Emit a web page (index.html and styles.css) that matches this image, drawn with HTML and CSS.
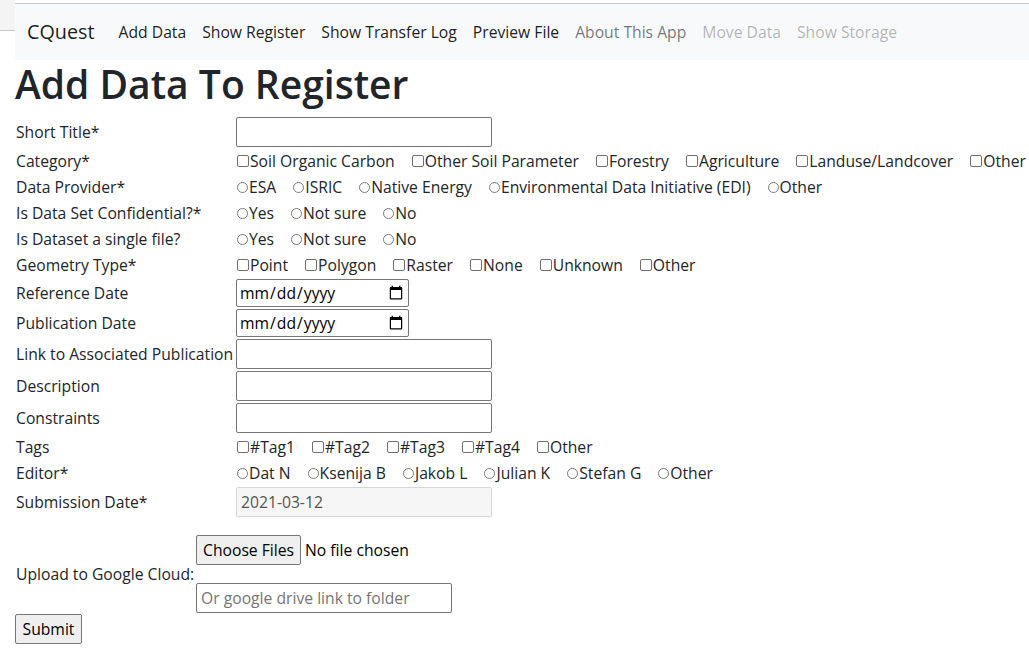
FILE: index.html
```html
<!DOCTYPE html>
<html lang="en">
<head>
<meta charset="utf-8">
<title>CQuest - Add Data</title>
<link rel="stylesheet" href="styles.css">
</head>
<body>
<div class="page">
  <div class="gutter"><div class="gutter-tab"></div></div>
  <div class="main">
    <nav class="navbar">
      <a class="brand" href="#">CQuest</a>
      <a class="nav-link active" href="#">Add Data</a>
      <a class="nav-link active" href="#">Show Register</a>
      <a class="nav-link active" href="#">Show Transfer Log</a>
      <a class="nav-link active" href="#">Preview File</a>
      <a class="nav-link" href="#">About This App</a>
      <a class="nav-link disabled" href="#">Move Data</a>
      <a class="nav-link disabled" href="#">Show Storage</a>
    </nav>
    <h1 class="title">Add Data To Register</h1>
    <form class="form">
      <div class="grid">
        <label class="lbl row-30">Short Title*</label>
        <div class="ctl row-30"><input class="text" type="text"></div>

        <label class="lbl">Category*</label>
        <div class="ctl opts">
          <label class="opt"><input type="checkbox" class="cb">Soil Organic Carbon</label>
          <label class="opt"><input type="checkbox" class="cb">Other Soil Parameter</label>
          <label class="opt"><input type="checkbox" class="cb">Forestry</label>
          <label class="opt"><input type="checkbox" class="cb">Agriculture</label>
          <label class="opt"><input type="checkbox" class="cb">Landuse/Landcover</label>
          <label class="opt"><input type="checkbox" class="cb">Other</label>
        </div>

        <label class="lbl">Data Provider*</label>
        <div class="ctl opts">
          <label class="opt"><input type="radio" name="prov" class="rb">ESA</label>
          <label class="opt"><input type="radio" name="prov" class="rb">ISRIC</label>
          <label class="opt"><input type="radio" name="prov" class="rb">Native Energy</label>
          <label class="opt"><input type="radio" name="prov" class="rb">Environmental Data Initiative (EDI)</label>
          <label class="opt"><input type="radio" name="prov" class="rb">Other</label>
        </div>

        <label class="lbl">Is Data Set Confidential?*</label>
        <div class="ctl opts">
          <label class="opt"><input type="radio" name="conf" class="rb">Yes</label>
          <label class="opt"><input type="radio" name="conf" class="rb">Not sure</label>
          <label class="opt"><input type="radio" name="conf" class="rb">No</label>
        </div>

        <label class="lbl">Is Dataset a single file?</label>
        <div class="ctl opts">
          <label class="opt"><input type="radio" name="single" class="rb">Yes</label>
          <label class="opt"><input type="radio" name="single" class="rb">Not sure</label>
          <label class="opt"><input type="radio" name="single" class="rb">No</label>
        </div>

        <label class="lbl">Geometry Type*</label>
        <div class="ctl opts">
          <label class="opt"><input type="checkbox" class="cb">Point</label>
          <label class="opt"><input type="checkbox" class="cb">Polygon</label>
          <label class="opt"><input type="checkbox" class="cb">Raster</label>
          <label class="opt"><input type="checkbox" class="cb">None</label>
          <label class="opt"><input type="checkbox" class="cb">Unknown</label>
          <label class="opt"><input type="checkbox" class="cb">Other</label>
        </div>

        <label class="lbl row-28">Reference Date</label>
        <div class="ctl row-28"><input class="date" type="date"></div>

        <label class="lbl row-28">Publication Date</label>
        <div class="ctl row-28"><input class="date" type="date"></div>

        <label class="lbl row-30">Link to Associated Publication</label>
        <div class="ctl row-30"><input class="text" type="text"></div>

        <label class="lbl row-30">Description</label>
        <div class="ctl row-30"><input class="text" type="text"></div>

        <label class="lbl row-30">Constraints</label>
        <div class="ctl row-30"><input class="text" type="text"></div>

        <label class="lbl">Tags</label>
        <div class="ctl opts">
          <label class="opt"><input type="checkbox" class="cb">#Tag1</label>
          <label class="opt"><input type="checkbox" class="cb">#Tag2</label>
          <label class="opt"><input type="checkbox" class="cb">#Tag3</label>
          <label class="opt"><input type="checkbox" class="cb">#Tag4</label>
          <label class="opt"><input type="checkbox" class="cb">Other</label>
        </div>

        <label class="lbl">Editor*</label>
        <div class="ctl opts">
          <label class="opt"><input type="radio" name="ed" class="rb">Dat N</label>
          <label class="opt"><input type="radio" name="ed" class="rb">Ksenija B</label>
          <label class="opt"><input type="radio" name="ed" class="rb">Jakob L</label>
          <label class="opt"><input type="radio" name="ed" class="rb">Julian K</label>
          <label class="opt"><input type="radio" name="ed" class="rb">Stefan G</label>
          <label class="opt"><input type="radio" name="ed" class="rb">Other</label>
        </div>

        <label class="lbl row-30">Submission Date*</label>
        <div class="ctl row-30"><input class="text readonly" type="text" value="2021-03-12" disabled></div>
      </div>

      <div class="upload">
        <label class="upload-lbl">Upload to Google Cloud:</label>
        <div class="upload-ctl">
          <div class="file">
            <button type="button" class="btn">Choose Files</button>
            <span class="file-status">No file chosen</span>
          </div>
          <input class="text link" type="text" placeholder="Or google drive link to folder">
        </div>
      </div>

      <button type="submit" class="btn submit">Submit</button>
    </form>
  </div>
</div>
</body>
</html>
```

FILE: styles.css
```css
* { box-sizing: border-box; }

html, body {
  margin: 0;
  padding: 0;
  background: #fff;
}

body {
  font-family: "Open Sans", "DejaVu Sans", sans-serif;
  font-size: 15.7px;
  line-height: 24px;
  color: #212529;
}

.page {
  display: flex;
  min-height: 664px;
}

.gutter {
  width: 15px;
  flex: none;
}

.gutter-tab {
  height: 31px;
  background: #f4f4f4;
  border-bottom: 1px solid #c8c8c8;
}

.main {
  flex: 1;
  padding-top: 3px;
}

/* navbar */
.navbar {
  display: flex;
  align-items: center;
  height: 57px;
  padding: 8px 12px;
  background: #f8f9fa;
  border-top: 1px solid #c9c9c9;
}

.brand {
  font-size: 19.8px;
  line-height: 30px;
  padding: 5px 0;
  margin-right: 16px;
  color: rgba(0, 0, 0, 0.9);
  text-decoration: none;
}

.nav-link {
  padding: 8px;
  color: rgba(0, 0, 0, 0.55);
  text-decoration: none;
}

.nav-link.active { color: rgba(0, 0, 0, 0.9); }
.nav-link.disabled { color: rgba(0, 0, 0, 0.3); }

/* heading */
.title {
  margin: 0 0 9px 0;
  font-size: 39px;
  line-height: 48px;
  font-weight: 600;
  color: #212529;
}

/* form grid */
.form {
  padding-left: 1px;
}

.grid {
  display: grid;
  grid-template-columns: 218px 1fr;
  column-gap: 2px;
  row-gap: 2px;
}

.lbl, .ctl {
  display: flex;
  align-items: center;
  min-height: 24px;
}

.row-30 { height: 30px; }
.row-28 { height: 28px; }

.lbl { white-space: nowrap; }

.opts {
  gap: 16px;
  white-space: nowrap;
}

.opt {
  display: flex;
  align-items: center;
}

.cb, .rb {
  appearance: none;
  -webkit-appearance: none;
  margin: 0 1px 0 1px;
  flex: none;
  background: #fff;
}

.cb {
  width: 12px;
  height: 12px;
  border: 1px solid #6f6f6f;
  border-radius: 2px;
}

.rb {
  width: 11px;
  height: 11px;
  border: 1px solid #7a7a7a;
  border-radius: 50%;
}

.text {
  width: 256px;
  height: 30px;
  margin: 0;
  padding: 1px 4px;
  font: inherit;
  color: inherit;
  border: 1px solid #767676;
  border-radius: 2px;
  background: #fff;
}

.text.readonly {
  background: #f6f6f6;
  border-color: #d6d6d6;
  color: #545454;
}

.text::placeholder { color: #757575; }

.date {
  width: 173px;
  height: 28px;
  margin: 0;
  padding: 0 2px;
  font: inherit;
  color: #000;
  border: 1px solid #767676;
  border-radius: 2px;
  background: #fff;
}

/* upload */
.upload {
  display: flex;
  align-items: center;
  gap: 2px;
  margin-top: 18px;
}

.upload-lbl {
  width: 178px;
  white-space: nowrap;
}

.upload-ctl {
  display: flex;
  flex-direction: column;
  gap: 18px;
}

.file {
  display: flex;
  align-items: center;
  gap: 4px;
  height: 30px;
}

.link { width: 256px; }

.btn {
  height: 30px;
  margin: 0;
  padding: 1px 6px;
  font: inherit;
  color: #000;
  background: #efefef;
  border: 1px solid #767676;
  border-radius: 2px;
}

.file-status { color: #000; }

.submit {
  display: block;
  margin: 1px 0 0 -1px;
  width: 67px;
}
```
